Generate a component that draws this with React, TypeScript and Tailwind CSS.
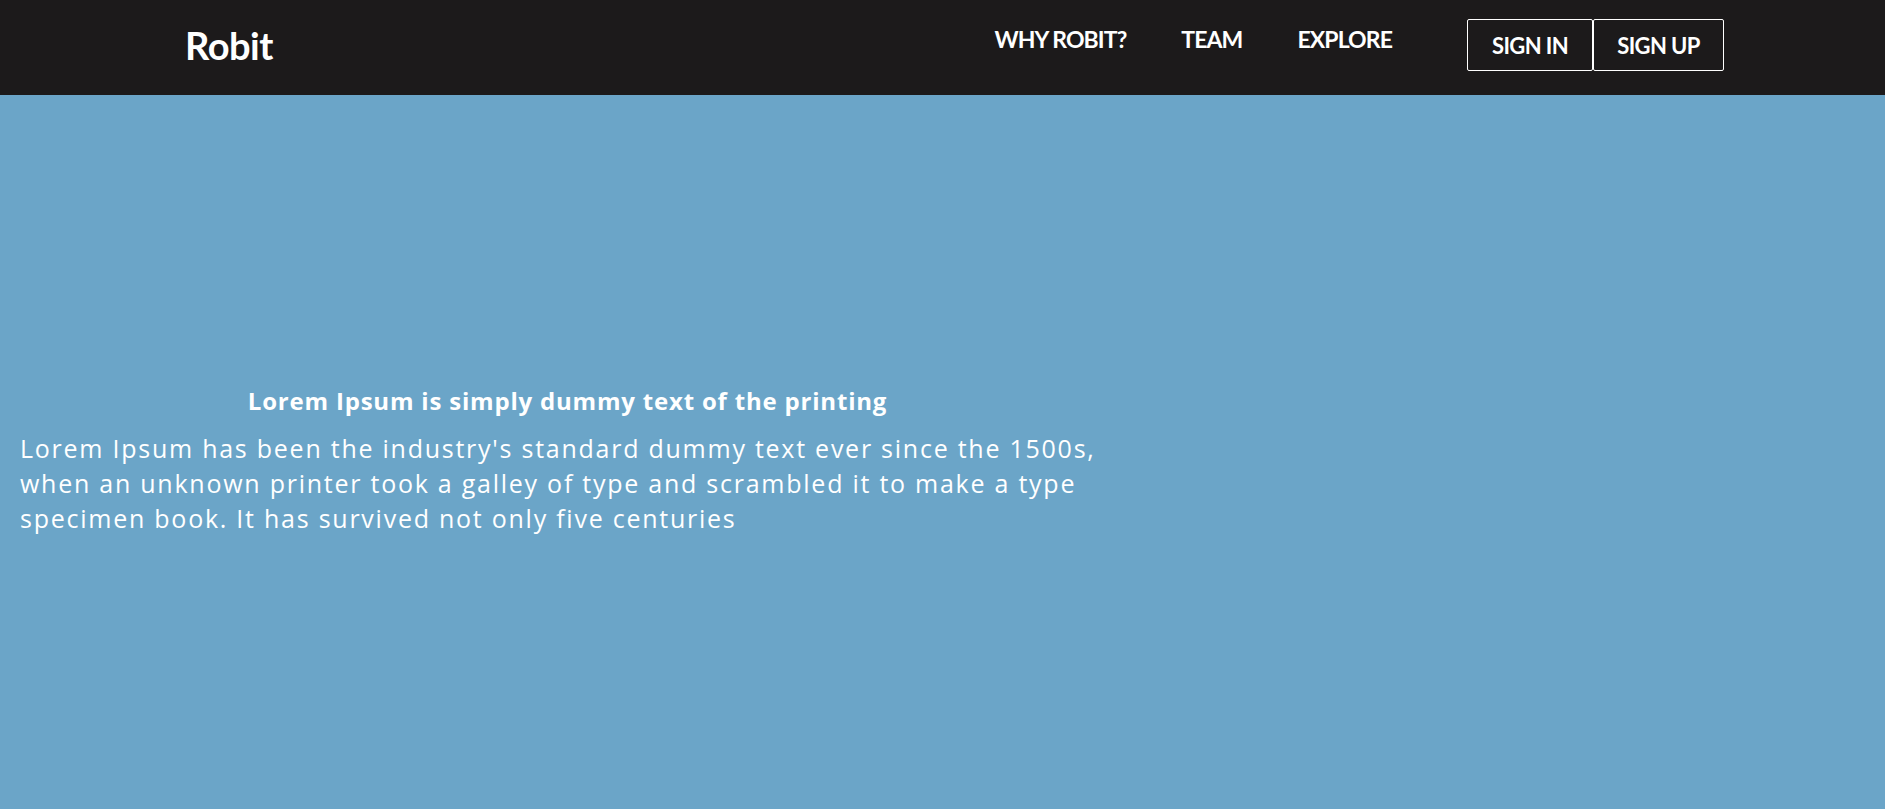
import React from "react";

const navLinks = ["WHY ROBIT?", "TEAM", "EXPLORE"];

const App: React.FC = () => {
  return (
    <div className="min-h-screen w-full flex flex-col bg-[#6ba5c8]" style={{ minHeight: 809 }}>
      <nav className="h-[95px] bg-[#1c1a1b] flex items-center pl-[185px] pr-[161px] font-['Lato',sans-serif] text-white">
        <a className="mb-[6px] text-[38px] font-bold leading-none tracking-[-0.5px]">Robit</a>
        <ul className="ml-auto flex items-center gap-[55px] pb-[17px]">
          {navLinks.map((link) => (
            <li key={link} className="text-[23px] font-bold tracking-[-0.9px] leading-none">
              {link}
            </li>
          ))}
        </ul>
        <div className="ml-[75px] mb-[5px] flex">
          <button className="h-[52px] w-[126px] border border-white rounded-[2px] text-[22px] font-bold tracking-[-0.6px]">
            SIGN IN
          </button>
          <button className="h-[52px] w-[131px] border border-white rounded-[2px] text-[22px] font-bold tracking-[-0.6px]">
            SIGN UP
          </button>
        </div>
      </nav>

      <main className="flex-1 flex items-center">
        <div className="w-[1135px] pl-[20px] pr-[20px] pt-[16px] text-white font-['Open_Sans',sans-serif]">
          <h1 className="text-center text-[24px] font-bold leading-[1.4] tracking-[0.8px]">
            Lorem Ipsum is simply dummy text of the printing
          </h1>
          <p className="mt-[14px] text-[25px] leading-[35px] tracking-[1.75px]">
            Lorem Ipsum has been the industry's standard dummy text ever since the 1500s,
            when an unknown printer took a galley of type and scrambled it to make a type
            specimen book. It has survived not only five centuries
          </p>
        </div>
      </main>
    </div>
  );
};

export default App;
